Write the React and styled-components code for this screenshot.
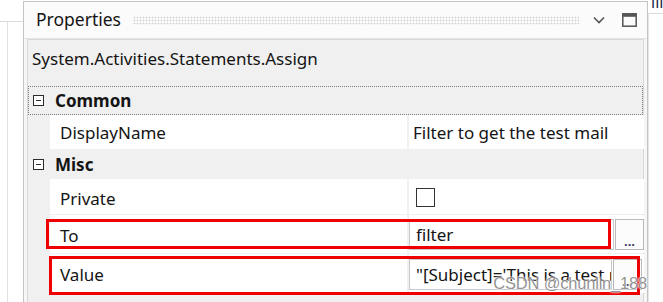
import React from 'react';
import styled, { createGlobalStyle } from 'styled-components';

const Global = createGlobalStyle`
  html, body {
    margin: 0;
    padding: 0;
    background: #ffffff;
  }
`;

const Screen = styled.div`
  display: grid;
  grid-template-columns: 23px 625px 15px;
  width: 663px;
  height: 302px;
  overflow: hidden;
  background: #ffffff;
  font-family: "Noto Sans", "Open Sans", sans-serif;
  font-size: 17px;
  color: #141414;
`;

/* fragments of the window behind the panel */
const LeftEdge = styled.div`
  padding-top: 21px;
`;

const EdgeFrame = styled.div`
  height: 100%;
  border-top: 1px solid #dcdcdc;
`;

const EdgeLine = styled.div`
  height: 100%;
  margin-left: 7px;
  border-left: 1px solid #e2e2e2;
`;

const RightEdge = styled.div`
  display: flex;
  flex-direction: column;
  overflow: hidden;
`;

const CutText = styled.span`
  display: block;
  height: 12px;
  margin-top: -8px;
  padding-left: 3px;
  line-height: 20px;
  font-size: 16px;
  color: #1d2a48;
  white-space: nowrap;
`;

const RightLine = styled.div`
  flex: 1;
  margin-top: 9px;
  border-top: 1px solid #dcdcdc;
  border-left: 1px solid #e6e6e6;
`;

const Panel = styled.section`
  display: flex;
  flex-direction: column;
  margin-top: 1px;
  border: 1px solid #c4c4c4;
  border-bottom: none;
  background: #f6f6f6;
`;

const TitleBar = styled.header`
  display: flex;
  align-items: center;
  height: 36px;
  padding: 0 10px 0 12px;
  background: #fbfbfb;
  border-bottom: 1px solid #e4e4e4;
`;

const Title = styled.span`
  font-size: 17.5px;
  line-height: 24px;
  margin-top: -2px;
`;

const Grip = styled.div`
  flex: 1;
  height: 9px;
  margin: 0 14px 0 12px;
  background-image: radial-gradient(circle, #d0d0d0 0.8px, transparent 1.1px);
  background-size: 3px 3px;
`;

const TitleButton = styled.button`
  display: flex;
  align-items: center;
  justify-content: center;
  width: ${p => p.$w}px;
  height: 20px;
  margin-left: ${p => p.$gap}px;
  padding: 0;
  border: none;
  background: transparent;
  color: #555555;
`;

const Body = styled.div`
  flex: 1;
  margin: 0 3px;
  border: 1px solid #d8d8d8;
  border-bottom: none;
  background: #f0f0f0;
`;

const TypeName = styled.div`
  height: 46px;
  padding: 6px 0 0 4px;
  box-sizing: border-box;
  line-height: 26px;
  white-space: nowrap;
`;

const Category = styled.div`
  display: flex;
  align-items: center;
  height: 29px;
  box-sizing: border-box;
  border: 1px dotted ${p => (p.$focused ? '#7b7b7b' : 'transparent')};
  margin-top: ${p => p.$top || 0}px;
`;

const Expander = styled.span`
  position: relative;
  width: 11px;
  height: 11px;
  margin: 0 11px 0 4px;
  box-sizing: border-box;
  border: 1.5px solid #2a2a2a;
  background: #ffffff;

  &::after {
    content: '';
    position: absolute;
    left: 2px;
    right: 2px;
    top: 3.5px;
    height: 1.5px;
    background: #2a2a2a;
  }
`;

const CategoryName = styled.span`
  font-weight: 700;
  line-height: 24px;
`;

const Row = styled.div`
  position: relative;
  display: grid;
  grid-template-columns: 20px 357px 235px;
  column-gap: 2px;
  height: ${p => p.$h}px;
  margin-bottom: ${p => p.$gap || 0}px;
`;

const LabelCell = styled.div`
  grid-column: 2;
  display: flex;
  align-items: center;
  padding-left: 10px;
  padding-top: ${p => p.$shift || 0}px;
  background: #ffffff;
  white-space: nowrap;
`;

const ValueCell = styled.div`
  display: flex;
  align-items: center;
  gap: 1px;
  padding-left: ${p => p.$pad ?? 4}px;
  padding-top: ${p => p.$shift || 0}px;
  background: #ffffff;
  white-space: nowrap;
  overflow: hidden;
`;

const CheckBox = styled.span`
  width: 19px;
  height: 19px;
  box-sizing: border-box;
  margin-left: 3px;
  border: 1px solid #333333;
  background: #ffffff;
`;

const TextBox = styled.div`
  flex: 1;
  display: flex;
  align-items: center;
  height: 31px;
  min-width: 0;
  padding-left: 6px;
  box-sizing: border-box;
  border: 1px solid #c9c9c9;
  background: #ffffff;
  overflow: hidden;
  white-space: nowrap;
`;

const EllipsisButton = styled.button`
  width: 29px;
  height: 31px;
  margin-right: ${p => p.$right || 0}px;
  padding: 0 0 3px;
  display: flex;
  align-items: flex-end;
  justify-content: center;
  box-sizing: border-box;
  border: 1px solid #b9b9b9;
  background: #fcfcfc;
  font-family: "Noto Sans", sans-serif;
  font-size: 13px;
  font-weight: 700;
  line-height: 10px;
  color: #3a3a5a;
`;

/* red annotation drawn over the row */
const Highlight = styled.div`
  position: absolute;
  top: ${p => p.$top}px;
  left: ${p => p.$left}px;
  width: ${p => p.$width}px;
  height: ${p => p.$height}px;
  border: 3px solid #ee0000;
  box-sizing: border-box;
  pointer-events: none;
`;

const Watermark = styled.div`
  position: absolute;
  right: 16px;
  bottom: 9px;
  font-family: "Liberation Sans", Arial, sans-serif;
  font-size: 16.5px;
  color: rgba(110, 110, 110, 0.75);
  text-shadow: 0 0 2px #ffffff, 0 0 2px #ffffff;
  letter-spacing: -0.2px;
  white-space: nowrap;
  pointer-events: none;
`;

const Page = styled.div`
  position: relative;
`;

const ChevronIcon = () => (
  <svg width="12" height="8" viewBox="0 0 12 8">
    <path d="M1 1.5 L6 6.5 L11 1.5" fill="none" stroke="currentColor" strokeWidth="1.6" />
  </svg>
);

const MaximizeIcon = () => (
  <svg width="15" height="14" viewBox="0 0 15 14">
    <rect x="0.8" y="0.8" width="13.4" height="12.4" fill="none" stroke="currentColor" strokeWidth="1.5" />
    <rect x="0.8" y="0.8" width="13.4" height="3" fill="currentColor" />
  </svg>
);

export default function App() {
  return (
    <Page>
      <Global />
      <Screen>
        <LeftEdge>
          <EdgeFrame>
            <EdgeLine />
          </EdgeFrame>
        </LeftEdge>

        <Panel>
          <TitleBar>
            <Title>Properties</Title>
            <Grip />
            <TitleButton $w={12} $gap={0}>
              <ChevronIcon />
            </TitleButton>
            <TitleButton $w={15} $gap={17}>
              <MaximizeIcon />
            </TitleButton>
          </TitleBar>

          <Body>
            <TypeName>System.Activities.Statements.Assign</TypeName>

            <Category $focused>
              <Expander />
              <CategoryName>Common</CategoryName>
            </Category>
            <Row $h={34}>
              <LabelCell>DisplayName</LabelCell>
              <ValueCell>Filter to get the test mail</ValueCell>
            </Row>

            <Category $top={1}>
              <Expander />
              <CategoryName>Misc</CategoryName>
            </Category>
            <Row $h={35} $gap={1}>
              <LabelCell $shift={3}>Private</LabelCell>
              <ValueCell $shift={1}>
                <CheckBox />
              </ValueCell>
            </Row>
            <Row $h={38} $gap={1}>
              <LabelCell $shift={3}>To</LabelCell>
              <ValueCell $pad={0} $shift={1}>
                <TextBox>filter</TextBox>
                <EllipsisButton>...</EllipsisButton>
              </ValueCell>
              <Highlight $top={4} $left={18} $width={565} $height={30} />
            </Row>
            <Row $h={39} $gap={1}>
              <LabelCell $shift={2}>Value</LabelCell>
              <ValueCell $pad={0} $shift={1}>
                <TextBox>"[Subject]='This is a test mail'"</TextBox>
                <EllipsisButton $right={2}>...</EllipsisButton>
              </ValueCell>
              <Highlight $top={2} $left={21} $width={591} $height={39} />
            </Row>
          </Body>
        </Panel>

        <RightEdge>
          <CutText>ilic</CutText>
          <RightLine />
        </RightEdge>
      </Screen>
      <Watermark>CSDN @chunlin_188</Watermark>
    </Page>
  );
}
